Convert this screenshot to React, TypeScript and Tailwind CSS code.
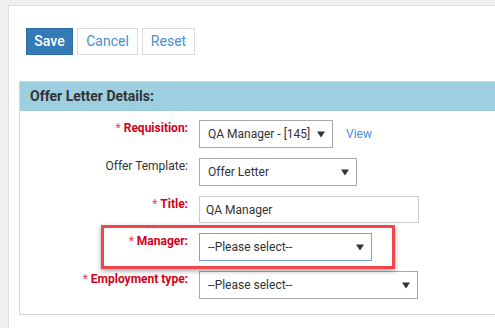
import React from "react";

function Caret() {
  return (
    <svg width="8" height="7" viewBox="0 0 8 7" className="shrink-0">
      <path d="M0 0.5h8L4 6.5z" fill="#333" />
    </svg>
  );
}

function Select({ value, width, focus }: { value: string; width: string; focus?: boolean }) {
  return (
    <div
      className={`${width} h-[28px] flex items-center justify-between pl-[8px] pr-[7px] bg-white text-[12px] text-[#333] border ${
        focus ? "border-[#7aa3e5]" : "border-[#aaa]"
      }`}
    >
      <span>{value}</span>
      <Caret />
    </div>
  );
}

function Label({ text, required }: { text: string; required?: boolean }) {
  return (
    <div className="w-[168px] shrink-0 text-right text-[12px] leading-[16px]">
      {required ? (
        <span className="font-bold text-[#d0021b]">
          <span className="text-[#e5484d] font-normal">* </span>
          {text}
        </span>
      ) : (
        <span className="text-[#333]">{text}</span>
      )}
    </div>
  );
}

export default function App() {
  return (
    <div
      className="w-[495px] h-[328px] overflow-hidden bg-[#efefef] pt-[5px] pl-[8px]"
      style={{ fontFamily: "Roboto, 'Liberation Sans', sans-serif" }}
    >
      <div className="h-full bg-white border-t border-l border-[#ddd] pt-[22px] pl-[10px]">
        {/* Buttons */}
        <div className="flex gap-[4px] ml-[7px]">
          <button className="w-[47px] h-[27px] bg-[#337ab7] border border-[#2e6da4] text-white text-[14px] font-medium">
            Save
          </button>
          <button className="w-[61px] h-[27px] bg-white border border-[#ddd] text-[#4a8fd6] text-[14px]">
            Cancel
          </button>
          <button className="w-[53px] h-[27px] bg-white border border-[#ddd] text-[#4a8fd6] text-[14px]">
            Reset
          </button>
        </div>

        {/* Section */}
        <div className="mt-[26px] border-t border-l border-b border-[#d6d6d6]">
          <div className="h-[29px] bg-[#9dcfe0] flex items-center pl-[10px] text-[14px] font-bold text-[#333]">
            Offer Letter Details:
          </div>
          <div className="flex flex-col gap-[10px] pt-[9px] pb-[15px]">
            <div className="flex items-start gap-[11px]">
              <Label text="Requisition:" required />
              <Select value="QA Manager - [145]" width="w-[134px]" />
              <a className="self-center ml-[2px] text-[12px] text-[#4a8fd6]">View</a>
            </div>
            <div className="flex items-start gap-[11px]">
              <Label text="Offer Template:" />
              <Select value="Offer Letter" width="w-[158px]" />
            </div>
            <div className="flex items-start gap-[11px]">
              <Label text="Title:" required />
              <div className="w-[220px] h-[27px] flex items-center pl-[6px] border border-[#ccc] text-[12px] text-[#333]">
                QA Manager
              </div>
            </div>
            <div className="relative flex items-start gap-[11px]">
              <Label text="Manager:" required />
              <Select value="--Please select--" width="w-[173px]" focus />
              <div className="absolute left-[81px] top-[-8px] w-[294px] h-[44px] border-[3px] border-[#f0454b] shadow-[0_2px_5px_rgba(0,0,0,0.35)] pointer-events-none" />
            </div>
            <div className="flex items-start gap-[11px]">
              <Label text="Employment type:" required />
              <Select value="--Please select--" width="w-[219px]" />
            </div>
          </div>
        </div>
      </div>
    </div>
  );
}
